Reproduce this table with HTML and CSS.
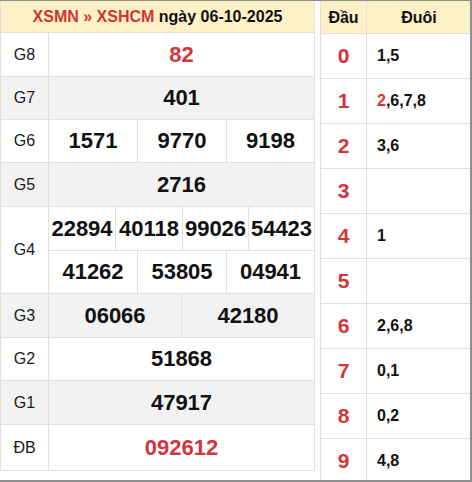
FILE: index.html
```
<!DOCTYPE html>
<html>
<head>
<meta charset="utf-8">
<link rel="stylesheet" href="styles.css">
</head>
<body>
<div class="frame">
  <div class="left">
    <div class="lhead"><span><span class="red">XSMN » XSHCM</span> ngày 06-10-2025</span></div>

    <div class="lab r1">G8</div>
    <div class="val r1"><div class="c red big">82</div></div>

    <div class="lab r2 gray">G7</div>
    <div class="val r2 gray"><div class="c">401</div></div>

    <div class="lab r3">G6</div>
    <div class="val r3 cols3"><div class="c">1571</div><div class="c">9770</div><div class="c">9198</div></div>

    <div class="lab r4 gray">G5</div>
    <div class="val r4 gray"><div class="c">2716</div></div>

    <div class="lab r5">G4</div>
    <div class="val r5 g4">
      <div class="cols4 sub1"><div class="c">22894</div><div class="c">40118</div><div class="c">99026</div><div class="c">54423</div></div>
      <div class="cols3 sub2"><div class="c">41262</div><div class="c">53805</div><div class="c">04941</div></div>
    </div>

    <div class="lab r6 gray">G3</div>
    <div class="val r6 cols2 gray"><div class="c">06066</div><div class="c">42180</div></div>

    <div class="lab r7">G2</div>
    <div class="val r7"><div class="c">51868</div></div>

    <div class="lab r8 gray">G1</div>
    <div class="val r8 gray"><div class="c">47917</div></div>

    <div class="lab r9">ĐB</div>
    <div class="val r9"><div class="c red">092612</div></div>
  </div>

  <div class="right">
    <div class="rhead">Đầu</div>
    <div class="rhead">Đuôi</div>
    <div class="dau">0</div><div class="duoi">1,5</div>
    <div class="dau">1</div><div class="duoi"><span><span class="red">2</span>,6,7,8</span></div>
    <div class="dau">2</div><div class="duoi">3,6</div>
    <div class="dau">3</div><div class="duoi"></div>
    <div class="dau">4</div><div class="duoi">1</div>
    <div class="dau">5</div><div class="duoi"></div>
    <div class="dau">6</div><div class="duoi">2,6,8</div>
    <div class="dau">7</div><div class="duoi">0,1</div>
    <div class="dau">8</div><div class="duoi">0,2</div>
    <div class="dau">9</div><div class="duoi">4,8</div>
  </div>
</div>
</body>
</html>
```

FILE: styles.css
```
* { box-sizing: border-box; }
html, body { margin: 0; padding: 0; background: #fff; }
body { font-family: "Liberation Sans", Arial, sans-serif; color: #111; }

.frame {
  width: 472px;
  height: 482px;
  border-top: 1px solid #8f8f8f;
  border-right: 2px solid #8f8f8f;
  border-bottom: 2px solid #8f8f8f;
  display: flex;
  align-items: flex-start;
  gap: 5px;
  overflow: hidden;
  background: #fff;
}

.red { color: #d0363c; }

/* left table */
.left {
  width: 315px;
  flex: none;
  display: grid;
  grid-template-columns: 47px 265px;
  grid-template-rows: 31px 43px 42px 42px 43px 86px 43px 42px 43px 45px;
  gap: 1px;
  background: #e3dfd9;
  border: 1px solid #e3dfd9;
  border-top: none;
}
.lhead {
  grid-column: 1 / 3;
  background: #fef1c8;
  font-weight: bold;
  font-size: 16px;
  display: flex;
  align-items: center;
  justify-content: center;
  padding-top: 1px;
}
.lab {
  background: #fff;
  font-size: 16px;
  display: flex;
  align-items: center;
  justify-content: center;
  color: #1a1a1a;
}
.val {
  background: #fff;
  display: grid;
}
.gray { background: #f2f2f2; }
.c {
  display: flex;
  align-items: center;
  justify-content: center;
  font-weight: bold;
  font-size: 22px;
  background: inherit;
}
.big { font-size: 22px; }

.cols2 { grid-template-columns: 1fr 1fr; gap: 1px; background: #e3dfd9; }
.cols3 { grid-template-columns: 88px 88px 87px; gap: 1px; background: #e3dfd9; }
.cols4 { grid-template-columns: 66px 66px 65px 65px; gap: 1px; background: #e3dfd9; }
.cols2 .c, .cols3 .c, .cols4 .c { background: #fff; }
.gray.cols2 .c { background: #f2f2f2; }

.g4 {
  grid-template-rows: 43px 42px;
  gap: 1px;
  background: #e3dfd9;
}
.sub1, .sub2 { display: grid; }

/* right table */
.right {
  width: 150px;
  flex: none;
  display: grid;
  grid-template-columns: 45px 104px;
  grid-template-rows: 32px repeat(10, 44px);
  gap: 1px;
  background: #e3dfd9;
  border-left: 1px solid #e3dfd9;
}
.rhead {
  background: #fef1c8;
  font-weight: bold;
  font-size: 16px;
  display: flex;
  align-items: center;
  justify-content: center;
  padding-top: 1px;
}
.dau {
  background: #fff;
  color: #d0363c;
  font-weight: bold;
  font-size: 21px;
  display: flex;
  align-items: center;
  justify-content: center;
}
.duoi {
  background: #fff;
  font-weight: bold;
  font-size: 16px;
  display: flex;
  align-items: center;
  padding-left: 10px;
}
```
